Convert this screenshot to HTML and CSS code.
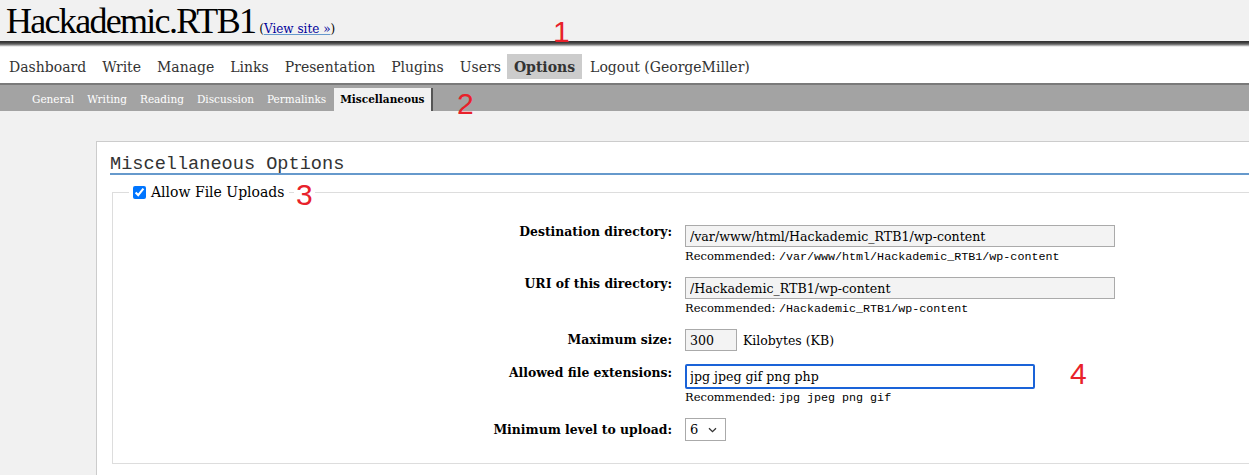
FILE: index.html
```html
<!DOCTYPE html>
<html>
<head>
<meta charset="utf-8">
<link rel="stylesheet" href="styles.css">
</head>
<body>
<div class="head">
  <h1 class="title">Hackademic.RTB1</h1>
  <span class="viewsite">(<a href="#">View site &raquo;</a>)</span>
</div>
<div class="menu">
  <a class="mi" href="#">Dashboard</a>
  <a class="mi" href="#">Write</a>
  <a class="mi" href="#">Manage</a>
  <a class="mi" href="#">Links</a>
  <a class="mi" href="#">Presentation</a>
  <a class="mi" href="#">Plugins</a>
  <a class="mi" href="#">Users</a>
  <a class="mi current" href="#">Options</a>
  <a class="mi" href="#">Logout (GeorgeMiller)</a>
</div>
<div class="submenu">
  <a class="si" href="#">General</a>
  <a class="si" href="#">Writing</a>
  <a class="si" href="#">Reading</a>
  <a class="si" href="#">Discussion</a>
  <a class="si" href="#">Permalinks</a>
  <a class="si current" href="#">Miscellaneous</a>
</div>
<div class="content">
  <div class="wrap">
    <h2 class="heading">Miscellaneous Options</h2>
    <fieldset class="options">
      <legend class="legend"><input type="checkbox" checked class="cb"> Allow File Uploads</legend>
      <div class="form">
        <div class="label">Destination directory:</div>
        <div class="field">
          <input class="txt wide" type="text" value="/var/www/html/Hackademic_RTB1/wp-content">
          <div class="rec">Recommended: <code class="mono">/var/www/html/Hackademic_RTB1/wp-content</code></div>
        </div>
        <div class="label">URI of this directory:</div>
        <div class="field">
          <input class="txt wide" type="text" value="/Hackademic_RTB1/wp-content">
          <div class="rec">Recommended: <code class="mono">/Hackademic_RTB1/wp-content</code></div>
        </div>
        <div class="label single">Maximum size:</div>
        <div class="field row">
          <input class="txt small" type="text" value="300"> <span class="unit">Kilobytes (KB)</span>
        </div>
        <div class="label ext-label">Allowed file extensions:</div>
        <div class="field">
          <input class="txt ext" type="text" value="jpg jpeg gif png php">
          <div class="rec tight">Recommended: <code class="mono">jpg jpeg png gif</code></div>
        </div>
        <div class="label single">Minimum level to upload:</div>
        <div class="field">
          <div class="selwrap">
            <select class="sel"><option>6</option></select>
            <svg class="chev" width="9" height="6" viewBox="0 0 9 6"><path d="M1 1.2 L4.5 4.6 L8 1.2" fill="none" stroke="#333" stroke-width="1.3"/></svg>
          </div>
        </div>
      </div>
    </fieldset>
  </div>
</div>
<span class="note n1">1</span>
<span class="note n2">2</span>
<span class="note n3">3</span>
<span class="note n4">4</span>
</body>
</html>
```
FILE: styles.css
```css
html, body {
  margin: 0;
  padding: 0;
}
body {
  background: #f1f1f1;
  font-family: "DejaVu Serif", Georgia, serif;
  color: #000;
  height: 475px;
  overflow: hidden;
  position: relative;
}
.head {
  height: 41px;
  display: flex;
  align-items: baseline;
  padding: 2px 0 0 6px;
  box-sizing: border-box;
}
.title {
  font-family: "Liberation Serif", serif;
  font-weight: normal;
  font-size: 36px;
  letter-spacing: -1.7px;
  margin: 0;
  line-height: 38px;
  color: #000;
}
.viewsite {
  font-size: 12px;
  margin-left: 4px;
  color: #000;
}
.viewsite a {
  color: #00019b;
  text-decoration: underline;
  text-decoration-color: #6699cc;
}
.menu {
  background: linear-gradient(to bottom, #2f2f2f 0, #444 2px, #8a8a8a 4px, #d8d8d8 5px, #fff 6px, #fff 100%);
  height: 37px;
  padding: 5px 0 0 3px;
  border-bottom: 2px solid #7a7a7a;
  display: flex;
  align-items: center;
  gap: 4px;
}
.mi {
  font-size: 14px;
  color: #333;
  text-decoration: none;
  padding: 5px 6px 4px;
  line-height: 16px;
  margin-top: 3px;
}
.mi.current {
  background: #cccccc;
  font-weight: bold;
  padding: 5px 7px 4px;
  margin-left: -4px;
  margin-right: -2px;
}
.submenu {
  background: #a3a3a3;
  height: 26px;
  display: flex;
  align-items: flex-end;
  padding-left: 27px;
  gap: 3px;
}
.si {
  font-size: 10.5px;
  color: #fff;
  text-decoration: none;
  padding: 0 5px;
  line-height: 23px;
}
.si.current {
  background: #f1f1f1;
  color: #000;
  font-weight: bold;
  border-right: 2px solid #555;
  padding: 0 6px;
}
.content {
  padding: 30px 0 0 96px;
}
.wrap {
  background: #fff;
  border-left: 1px solid #ccc;
  border-top: 1px solid #ccc;
  padding: 12px 0 0 13px;
  height: 321px;
}
.heading {
  font-family: "Liberation Mono", "DejaVu Sans Mono", monospace;
  font-weight: normal;
  font-size: 18.6px;
  color: #333;
  margin: 0;
  padding-top: 3px;
  line-height: 16px;
  border-bottom: 2px solid #6699cc;
}
.options {
  margin: 8px 0 0 2px;
  border: 1px solid #ddd;
  border-right: 0;
  padding: 24px 0 0 0;
  height: 281px;
  box-sizing: border-box;
}
.legend {
  font-size: 14px;
  padding: 0 4px 0 4px;
  margin-left: 16px;
  display: flex;
  align-items: center;
  gap: 5px;
  line-height: 18px;
}
.cb {
  margin: 0;
  width: 13px;
  height: 13px;
}
.form {
  display: grid;
  grid-template-columns: 559px 1fr;
  column-gap: 13px;
  row-gap: 13px;
}
.label {
  text-align: right;
  font-weight: bold;
  font-size: 12.4px;
  line-height: 14px;
  padding-top: 0;
}
.label.single {
  align-self: center;
}
.label.ext-label {
  padding-top: 2px;
}
.field {
  font-size: 12.5px;
}
.field.row {
  display: flex;
  align-items: center;
  gap: 6px;
}
.txt {
  font-family: "DejaVu Serif", Georgia, serif;
  font-size: 12.6px;
  border: 1px solid #aaa;
  background: #f3f3f3;
  height: 22px;
  box-sizing: border-box;
  padding: 0 4px;
  margin: 0;
  color: #000;
  display: block;
}
.wide { width: 430px; }
.small { width: 52px; }
.ext {
  width: 350px;
  height: 25px;
  background: #fff;
  border: 2px solid #1a63d8;
  border-radius: 2px;
  padding: 0 3px;
}
.unit {
  font-size: 12.5px;
}
.rec {
  font-size: 11.5px;
  line-height: 16px;
  height: 16px;
  margin-top: 1px;
}
.rec.tight {
  margin-top: 0;
}
.mono {
  font-family: "Liberation Mono", "DejaVu Sans Mono", monospace;
  font-size: 11.7px;
  line-height: 1;
}
.selwrap {
  position: relative;
  width: 41px;
  height: 23px;
}
.sel {
  -webkit-appearance: none;
  appearance: none;
  font-family: "DejaVu Serif", Georgia, serif;
  font-size: 13px;
  width: 41px;
  height: 23px;
  border: 1px solid #aaa;
  border-radius: 0;
  background: #fff;
  margin: 0;
  padding: 0 0 0 4px;
  color: #000;
}
.chev {
  position: absolute;
  right: 9px;
  top: 9px;
  pointer-events: none;
}
.note {
  position: absolute;
  font-family: "Liberation Sans", Arial, sans-serif;
  font-size: 30px;
  line-height: 30px;
  color: #e8212a;
}
.n1 { left: 553px; top: 17px; }
.n2 { left: 457px; top: 89px; }
.n3 { left: 294px; top: 180px; background: #fff; padding: 0 2px; }
.n4 { left: 1070px; top: 359px; }
```
